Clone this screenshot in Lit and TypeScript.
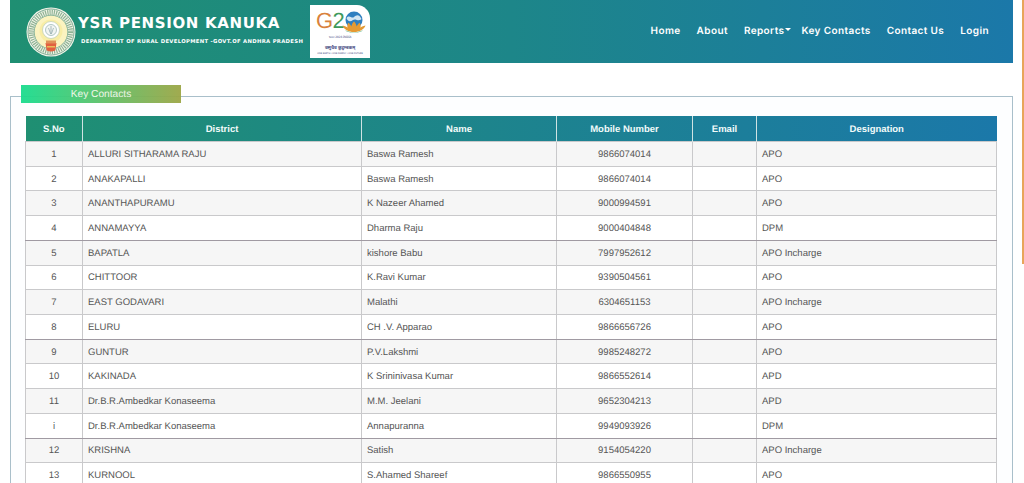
import { LitElement, html, css, svg } from "lit";
import { customElement } from "lit/decorators.js";

type Row = [string, string, string, string, string, boolean?];
const rows: Row[] = [
  ["1", "ALLURI SITHARAMA RAJU", "Baswa Ramesh", "9866074014", "APO"],
  ["2", "ANAKAPALLI", "Baswa Ramesh", "9866074014", "APO"],
  ["3", "ANANTHAPURAMU", "K Nazeer Ahamed", "9000994591", "APO"],
  ["4", "ANNAMAYYA", "Dharma Raju", "9000404848", "DPM"],
  ["5", "BAPATLA", "kishore Babu", "7997952612", "APO Incharge", true],
  ["6", "CHITTOOR", "K.Ravi Kumar", "9390504561", "APO"],
  ["7", "EAST GODAVARI", "Malathi", "6304651153", "APO Incharge"],
  ["8", "ELURU", "CH .V. Apparao", "9866656726", "APO"],
  ["9", "GUNTUR", "P.V.Lakshmi", "9985248272", "APO", true],
  ["10", "KAKINADA", "K Srininivasa Kumar", "9866552614", "APD"],
  ["11", "Dr.B.R.Ambedkar Konaseema", "M.M. Jeelani", "9652304213", "APD"],
  ["i", "Dr.B.R.Ambedkar Konaseema", "Annapuranna", "9949093926", "DPM"],
  ["12", "KRISHNA", "Satish", "9154054220", "APO Incharge", true],
  ["13", "KURNOOL", "S.Ahamed Shareef", "9866550955", "APO"],
];

const emblem = svg`
  <svg class="emblem" viewBox="0 0 50 50" aria-hidden="true">
    <circle cx="25" cy="25" r="24.5" fill="#f4f5ea"/>
    <circle cx="25" cy="25" r="23" fill="none" stroke="#5f9a80" stroke-width=".8"/>
    <circle cx="25" cy="25" r="19.6" fill="none" stroke="#8fb394" stroke-width="5" stroke-dasharray="1.2 1"/>
    <circle cx="25" cy="25" r="16.8" fill="#fbf3c0" stroke="#6fa48c" stroke-width=".8"/>
    <circle cx="25" cy="24" r="11.5" fill="#f8eda6"/>
    <circle cx="25" cy="23" r="8.5" fill="#fff" stroke="#c2d2b8" stroke-width=".8"/>
    <circle cx="25" cy="23" r="5.5" fill="#f2f5f2" stroke="#a0bab6" stroke-width=".8"/>
    <path d="M25 19v8M22.500 21c1 2 1 4 2.500 6M27.500 21c-1 2-1 4-2.500 6" stroke="#8aa5a8" stroke-width=".7" fill="none"/>
    <path d="M19.500 36h11l-1.200 7.500c-3 1.400-5.600 1.400-8.600 0z" fill="#e2603f"/>
    <path d="M20 33.500h10v3H20z" fill="#e0925a"/>
    <path d="M21 39h8v1.500h-8z" fill="#e9bf5c"/>
  </svg>`;

const g20 = svg`
  <svg class="g20" viewBox="0 0 60 53" role="img">
    <path d="M0 0h47c7 0 13 6 13 13v40H0z" fill="#fff"/>
    <text x="6" y="23" class="g">G</text>
    <text x="22.500" y="23" class="two">2</text>
    <circle cx="44" cy="15" r="8.500" fill="#2f7fc0"/>
    <path d="M36.500 13c3-4 5 1 7.500-1s5-3 7.500 2c-3 3-6-1-8.500 1s-5 2-6.500-2z" fill="#d3e6f2"/>
    <path d="M44 27c-5.500 0-10-2.500-11.500-6.500 2.800.4 4.200 1.400 5 2.300-.4-1.800 0-3.700.9-5 1.400.9 2.300 2.300 2.800 3.600.5-1.800 1.400-3.600 2.800-5 1.400 1.400 2.300 3.200 2.800 5 .5-1.300 1.400-2.700 2.800-3.600.9 1.300 1.300 3.200.9 5 .8-.9 2.200-1.900 5-2.300C54 24.500 49.500 27 44 27z" fill="#e59a33"/>
    <path d="M35 25c4.500 3.200 13.500 3.200 18 0-2.800 3.600-15.200 3.600-18 0z" fill="#2f9a58"/>
    <text x="30" y="33" text-anchor="middle" class="tiny">भारत 2023 INDIA</text>
    <text x="30" y="44" text-anchor="middle" class="sk">वसुधैव कुटुम्बकम्</text>
    <text x="30" y="49" text-anchor="middle" class="tiny2">ONE EARTH • ONE FAMILY • ONE FUTURE</text>
  </svg>`;

@customElement("app-root")
export class AppRoot extends LitElement {
  static styles = css`
    :host { display: block; background: #fff; font-family: "Liberation Sans", Arial, sans-serif; height: 483px; overflow: hidden; position: relative; text-rendering: geometricPrecision; }
    .page { padding: 0 11px 0 10px; }
    .edge { position: absolute; top: 0; right: 0; height: 264px; width: 2px; background: #e8a55a; }
    header { height: 63px; display: flex; align-items: center; background: linear-gradient(90deg, #1f8f72 0%, #1d8689 50%, #1b78a9 100%); }
    .emblem { width: 50px; height: 50px; margin: 0 0 0 16px; flex: none; }
    .brand { align-self: flex-start; padding-top: 13px; margin-left: 2px; width: 228px; flex: none; color: #fff; }
    .brand h1 { margin: 0; font: bold 15px/20px "DejaVu Sans", sans-serif; letter-spacing: .65px; white-space: nowrap; }
    .brand p { margin: 4.500px 0 0 3px; font: bold 5.300px/8px "DejaVu Sans", sans-serif; letter-spacing: .31px; white-space: nowrap; }
    .g20 { width: 60px; height: 53px; flex: none; margin: 0 0 0 4px; }
    .g { font: 22px "Liberation Sans", sans-serif; fill: #d9823d; }
    .two { font: 22px "Liberation Sans", sans-serif; fill: #3f9a5c; }
    .tiny { font: 3px "Noto Sans", sans-serif; fill: #38407a; }
    .sk { font: bold 4.500px "Noto Sans", sans-serif; fill: #38407a; }
    .tiny2 { font: 2.400px "Noto Sans", sans-serif; fill: #38407a; }
    nav { margin-left: auto; margin-right: 24px; margin-top: -1px; display: flex; align-items: center; color: #fff; font: 600 10px/14px "Inter", sans-serif; letter-spacing: .4px; white-space: nowrap; }
    nav a { margin-left: 16px; }
    nav a.rep { position: relative; margin-right: 17px; }
    nav a.rep::after { content: ""; position: absolute; right: -7px; top: 4px; border: 3px solid transparent; border-top-color: #fff; border-bottom: 0; }
    nav a.rep + a { margin-left: 0; }
    .box { margin-top: 33px; border: 1px solid #a9bfca; padding: 0 15px; background: #fdfeff; height: 500px; }
    .legend { width: 160px; height: 18px; margin: -12px 0 0 -5px; padding-top: 1px; line-height: 17px; text-align: center; font-size: 10.200px; color: #eef6e8; box-sizing: border-box; background: linear-gradient(90deg, rgba(26, 220, 142, .95) 0%, rgba(156, 166, 70, .95) 100%); }
    table { margin: 13px 0 0 -1px; width: 971px; border-collapse: collapse; table-layout: fixed; font-size: 9.500px; color: #555; background: #fff; }
    thead tr { background: linear-gradient(90deg, #1f8f72 0%, #1b78a9 100%); }
    th { height: 24px; padding: 1px 0 0; color: #f2fbfa; font-size: 9.500px; font-weight: bold; text-align: center; border-left: 1px solid #cfe3e3; }
    th:first-child { border-left: 0; }
    td { height: 21.720px; padding: 2px 5px 0; border: 1px solid #c9c9cb; line-height: 14px; white-space: nowrap; }
    tbody tr:nth-child(odd) { background: #f6f6f6; }
    tr:has(+ tr.dark) td { border-bottom-color: #a09aa2; }
    .c { text-align: center; }
    .w1 { width: 57px; } .w2 { width: 279px; } .w3 { width: 195px; } .w4 { width: 136px; } .w5 { width: 64px; } .w6 { width: 240px; }
  `;

  render() {
    return html`
      <div class="edge"></div>
      <div class="page">
        <header>
          ${emblem}
          <div class="brand">
            <h1>YSR PENSION KANUKA</h1>
            <p>DEPARTMENT OF RURAL DEVELOPMENT -GOVT.OF ANDHRA PRADESH</p>
          </div>
          ${g20}
          <nav>
            <a>Home</a><a>About</a><a class="rep">Reports</a><a>Key Contacts</a><a>Contact Us</a><a>Login</a>
          </nav>
        </header>
        <section class="box">
          <div class="legend">Key Contacts</div>
          <table>
            <colgroup>
              <col class="w1" /><col class="w2" /><col class="w3" /><col class="w4" /><col class="w5" /><col class="w6" />
            </colgroup>
            <thead>
              <tr><th>S.No</th><th>District</th><th>Name</th><th>Mobile Number</th><th>Email</th><th>Designation</th></tr>
            </thead>
            <tbody>
              ${rows.map(
                (r) => html`<tr class=${r[5] ? "dark" : ""}>
                  <td class="c">${r[0]}</td><td>${r[1]}</td><td>${r[2]}</td><td class="c">${r[3]}</td><td></td><td>${r[4]}</td>
                </tr>`
              )}
            </tbody>
          </table>
        </section>
      </div>
    `;
  }
}
